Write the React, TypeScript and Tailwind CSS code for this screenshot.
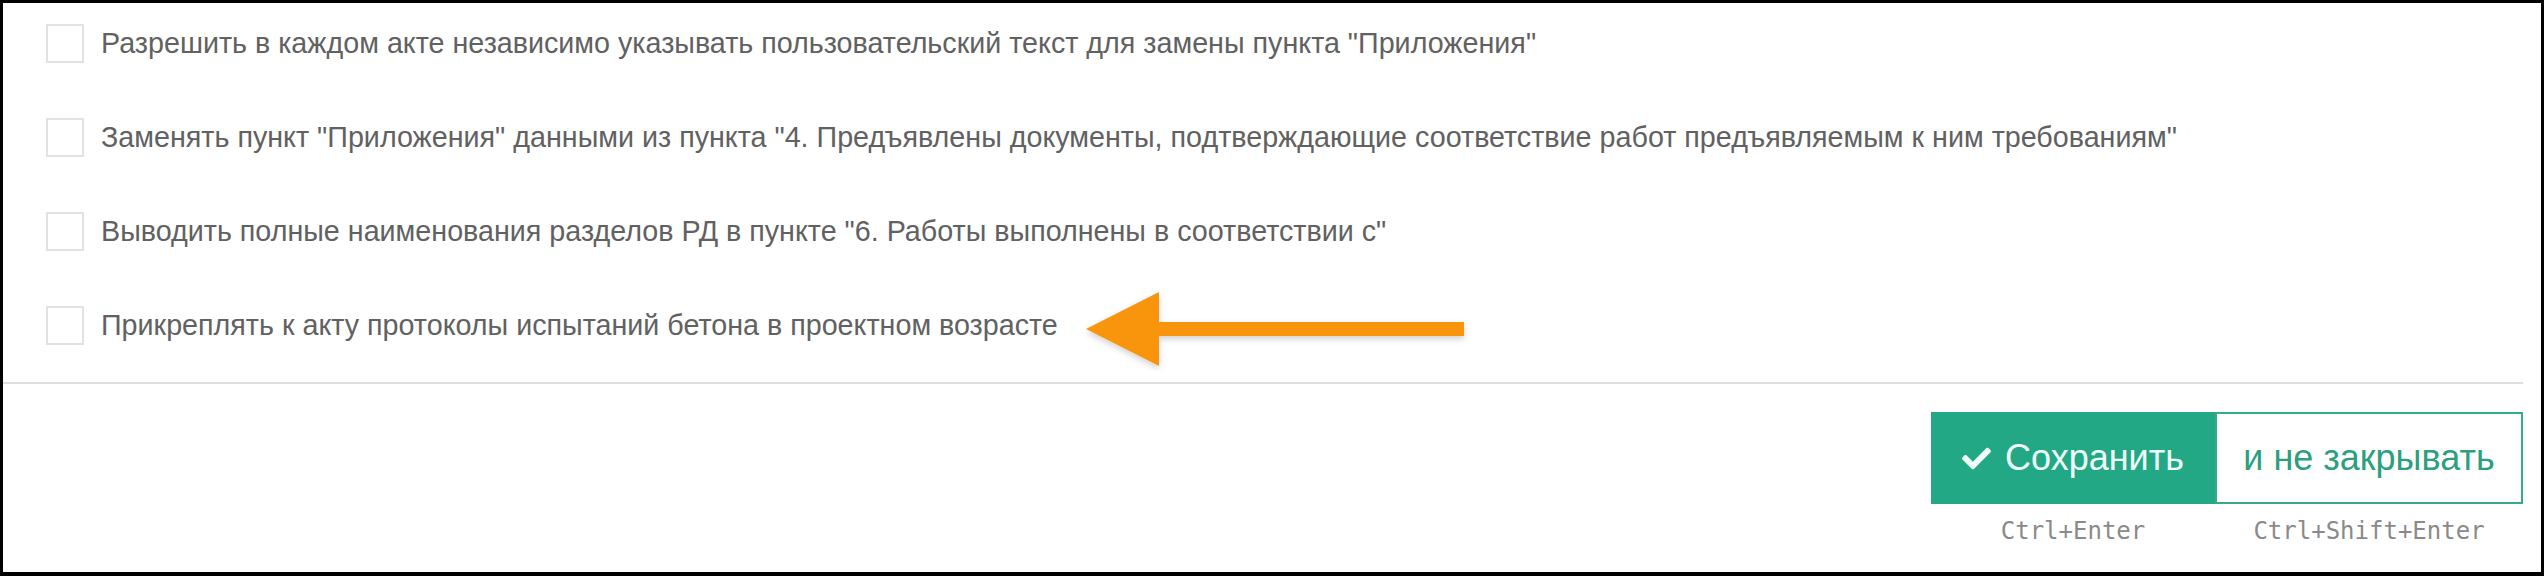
import { FaCheck } from "react-icons/fa";

const options: string[] = [
  'Разрешить в каждом акте независимо указывать пользовательский текст для замены пункта "Приложения"',
  'Заменять пункт "Приложения" данными из пункта "4. Предъявлены документы, подтверждающие соответствие работ предъявляемым к ним требованиям"',
  'Выводить полные наименования разделов РД в пункте "6. Работы выполнены в соответствии с"',
  "Прикреплять к акту протоколы испытаний бетона в проектном возрасте",
];

export default function App() {
  return (
    <div className="relative h-[576px] w-[2544px] border-[3px] border-b-4 border-black bg-white font-['Liberation_Sans',Arial,sans-serif]">
      {/* Options */}
      <ul className="m-0 flex list-none flex-col gap-[55px] p-0 pl-[43px] pt-[21px]">
        {options.map((label) => (
          <li key={label} className="flex h-[39px] items-center gap-[17px]">
            <span className="h-[39px] w-[38px] shrink-0 border-2 border-[#e2e2e2] bg-white" />
            <span className="text-[28.7px] leading-none text-[#616161]">{label}</span>
          </li>
        ))}
      </ul>

      <div className="mt-[37px] mr-[18px] h-[2px] bg-[#dedede]" />

      {/* Footer actions */}
      <div className="flex justify-end pr-[18px] pt-[28px]">
        <div className="flex flex-col items-center">
          <button className="flex h-[92px] w-[284px] items-center justify-center gap-[14px] bg-[#22a884] text-[36px] text-[#effff9]">
            <FaCheck size={29} />
            <span>Сохранить</span>
          </button>
          <span className="mt-[15px] font-['DejaVu_Sans_Mono',monospace] text-[24px] leading-none text-[#8a8a8a]">
            Ctrl+Enter
          </span>
        </div>
        <div className="flex flex-col items-center">
          <button className="flex h-[92px] w-[308px] items-center justify-center border-2 border-[#3aa98a] bg-white text-[36px] text-[#2b9f7e]">
            и не закрывать
          </button>
          <span className="mt-[15px] font-['DejaVu_Sans_Mono',monospace] text-[24px] leading-none text-[#8a8a8a]">
            Ctrl+Shift+Enter
          </span>
        </div>
      </div>

      {/* Annotation arrow */}
      <svg
        className="pointer-events-none absolute left-[1080px] top-[286px]"
        width="390"
        height="82"
        viewBox="0 0 390 82"
      >
        <defs>
          <filter id="sh" x="-10%" y="-30%" width="120%" height="160%">
            <feDropShadow dx="0" dy="3" stdDeviation="3" floodColor="#000" floodOpacity="0.18" />
          </filter>
        </defs>
        <g filter="url(#sh)" fill="#f9940f">
          <polygon points="3,40 76,3 76,77" />
          <rect x="75" y="33" width="306" height="14" />
        </g>
      </svg>
    </div>
  );
}
